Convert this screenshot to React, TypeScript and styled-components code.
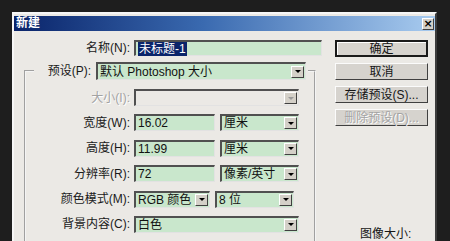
import styled, { createGlobalStyle } from 'styled-components'

const GlobalStyle = createGlobalStyle`
  html, body {
    margin: 0;
    padding: 0;
    background: #1e1e1e;
  }
  body {
    width: 450px;
    height: 241px;
    overflow: hidden;
    font-family: 'Liberation Sans', 'Noto Sans CJK SC', sans-serif;
    font-size: 12px;
    color: #151515;
  }
`

const Screen = styled.div`
  width: 450px;
  height: 241px;
  box-sizing: border-box;
  padding: 12px 13px 0 12px;
  overflow: hidden;
`

const Dialog = styled.div`
  height: 240px;
  box-sizing: border-box;
  background: #ebe9e5;
  border: 2px solid;
  border-color: #f6f6f6 #3c3c3c #3c3c3c #f6f6f6;
  padding-top: 2px;
`

const TitleBar = styled.div`
  height: 15px;
  display: flex;
  align-items: center;
  justify-content: space-between;
  padding: 0 1px 0 2px;
  background: linear-gradient(90deg, #0a246a 0%, #3a6ab0 45%, #a8cbef 100%);
`

const Title = styled.span`
  color: #fff;
  font-weight: bold;
  font-size: 12px;
  line-height: 15px;
`

const CloseBox = styled.div`
  width: 12px;
  height: 12px;
  box-sizing: border-box;
  background: #d4d0c8;
  border: 1px solid;
  border-color: #fff #404040 #404040 #fff;
  display: flex;
  align-items: center;
  justify-content: center;
  font-size: 11px;
  font-weight: bold;
  line-height: 1;
  color: #000;
  font-family: 'DejaVu Sans', sans-serif;
`

const Body = styled.div`
  display: flex;
  gap: 13px;
  padding-top: 9px;
`

const LeftPane = styled.div`
  width: 308px;
  display: flex;
  flex-direction: column;
`

const Row = styled.div<{ $label: number }>`
  display: grid;
  grid-template-columns: ${p => p.$label}px auto;
  column-gap: 4px;
  align-items: center;
`

const Controls = styled.div`
  display: flex;
  gap: 5px;
`

const Label = styled.span<{ $disabled?: boolean }>`
  text-align: right;
  white-space: nowrap;
  line-height: 1;
  color: ${p => (p.$disabled ? '#a3a3a3' : '#1a1a1a')};
  ${p => p.$disabled && 'text-shadow: 1px 1px 0 #fff;'}
`

const Field = styled.div<{ $w: number; $h?: number; $disabled?: boolean }>`
  width: ${p => p.$w}px;
  height: ${p => p.$h ?? 17}px;
  box-sizing: border-box;
  background: ${p => (p.$disabled ? '#ebe9e5' : '#c9e7cc')};
  border-style: solid;
  border-width: 2px 1px 1px 2px;
  border-color: #505050 #e2e2e2 #e2e2e2 #505050;
  display: flex;
  align-items: center;
  padding: 0 1px 0 2px;
  white-space: nowrap;
  line-height: 1;
  color: #111;
`

const Selected = styled.span`
  background: #0a246a;
  color: #fff;
  padding: 1px 1px;
`

const ArrowButton = styled.div<{ $disabled?: boolean }>`
  margin-left: auto;
  width: 13px;
  height: 12px;
  box-sizing: border-box;
  background: #d4d0c8;
  border: 1px solid;
  border-color: #fff #404040 #404040 #fff;
  display: flex;
  align-items: center;
  justify-content: center;

  &::after {
    content: '';
    border-left: 3px solid transparent;
    border-right: 3px solid transparent;
    border-top: 3px solid ${p => (p.$disabled ? '#9a9a9a' : '#000')};
  }
`

const Group = styled.fieldset`
  margin: 6px 0 0 10px;
  width: 292px;
  box-sizing: border-box;
  padding: 9px 0 40px 0;
  border: 2px groove #f4f4f4;
  border-bottom: none;
  display: flex;
  flex-direction: column;
  gap: 8.4px;
  min-width: 0;
`

const Legend = styled.legend`
  margin-left: 8px;
  padding: 0;
  width: 274px;
  display: flex;
  align-items: center;
  gap: 5px;
`

const PresetLabel = styled(Label)`
  width: 57px;
`

const RightPane = styled.div`
  width: 93px;
  display: flex;
  flex-direction: column;
  gap: 6px;
`

const Button = styled.div<{ $primary?: boolean; $disabled?: boolean }>`
  height: 17px;
  box-sizing: border-box;
  background: #d6d3ce;
  border: ${p => (p.$primary ? '2px solid #1a1a1a' : '1px solid')};
  ${p => !p.$primary && 'border-color: #fbfbfb #404040 #404040 #fbfbfb;'}
  ${p => p.$primary && 'box-shadow: inset 1px 1px 0 #fff;'}
  display: flex;
  align-items: center;
  justify-content: center;
  line-height: 1;
  color: ${p => (p.$disabled ? '#a4a4a4' : '#151515')};
  ${p => p.$disabled && 'text-shadow: 1px 1px 0 #fff;'}
`

const ImageSize = styled.span`
  margin-top: 96px;
  padding-left: 25px;
  line-height: 1;
`

function Select({ w, h, value, disabled }: { w: number; h?: number; value?: string; disabled?: boolean }) {
  return (
    <Field $w={w} $h={h} $disabled={disabled}>
      {value}
      <ArrowButton $disabled={disabled} />
    </Field>
  )
}

export default function App() {
  return (
    <>
      <GlobalStyle />
      <Screen>
        <Dialog>
          <TitleBar>
            <Title>新建</Title>
            <CloseBox>×</CloseBox>
          </TitleBar>
          <Body>
            <LeftPane>
              <Row $label={116}>
                <Label>名称(N):</Label>
                <Field $w={188} $h={16}>
                  <Selected>未标题-1</Selected>
                </Field>
              </Row>
              <Group>
                <Legend>
                  <PresetLabel>预设(P):</PresetLabel>
                  <Select w={210} h={18} value="默认 Photoshop 大小" />
                </Legend>
                <Row $label={104}>
                  <Label $disabled>大小(I):</Label>
                  <Select w={165} disabled />
                </Row>
                <Row $label={104}>
                  <Label>宽度(W):</Label>
                  <Controls>
                    <Field $w={81}>16.02</Field>
                    <Select w={79} value="厘米" />
                  </Controls>
                </Row>
                <Row $label={104}>
                  <Label>高度(H):</Label>
                  <Controls>
                    <Field $w={81}>11.99</Field>
                    <Select w={79} value="厘米" />
                  </Controls>
                </Row>
                <Row $label={104}>
                  <Label>分辨率(R):</Label>
                  <Controls>
                    <Field $w={81}>72</Field>
                    <Select w={79} value="像素/英寸" />
                  </Controls>
                </Row>
                <Row $label={104}>
                  <Label>颜色模式(M):</Label>
                  <Controls>
                    <Select w={76} value="RGB 颜色" />
                    <Select w={79} value="8 位" />
                  </Controls>
                </Row>
                <Row $label={104}>
                  <Label>背景内容(C):</Label>
                  <Select w={165} value="白色" />
                </Row>
              </Group>
            </LeftPane>
            <RightPane>
              <Button $primary>确定</Button>
              <Button>取消</Button>
              <Button>存储预设(S)...</Button>
              <Button $disabled>删除预设(D)...</Button>
              <ImageSize>图像大小:</ImageSize>
            </RightPane>
          </Body>
        </Dialog>
      </Screen>
    </>
  )
}
